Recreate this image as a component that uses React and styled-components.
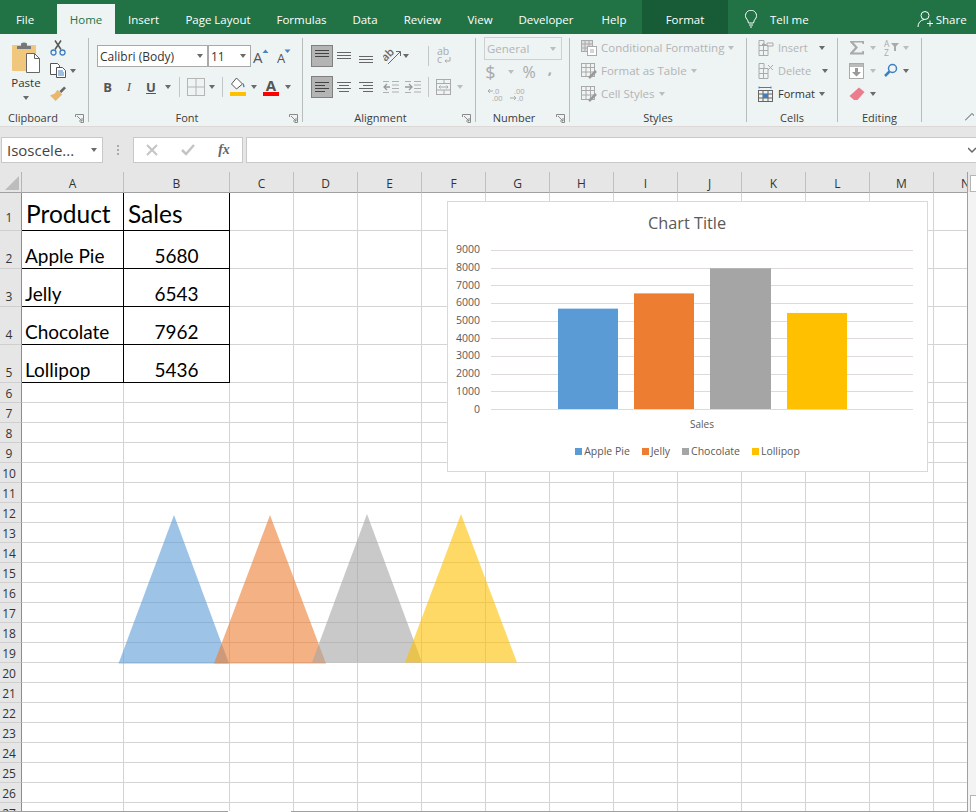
import React from 'react';
import styled, { createGlobalStyle } from 'styled-components';

const UI = `"Open Sans", "Noto Sans", "Liberation Sans", sans-serif`;
const CELL = `Lato, "Liberation Sans", sans-serif`;
const DIS = '#b3b3b3';

const Global = createGlobalStyle`
  html, body { margin: 0; padding: 0; background: #fff; }
  body { font-family: ${UI}; }
  #root { width: 976px; height: 812px; overflow: hidden; }
`;

const Page = styled.div`
  width: 976px; height: 812px; display: flex; flex-direction: column; overflow: hidden;
`;

/* ---------- tabs ---------- */
const TabBar = styled.div`
  height: 34px; flex: none; display: flex; background: #217346; color: #fff; padding-top: 4px; box-sizing: border-box;
`;
const Tab = styled.div`
  width: ${p => p.$w}px; flex: none; display: flex; align-items: center; justify-content: center;
  padding-right: ${p => p.$pr || 0}px; box-sizing: border-box; font-size: 11.5px;
  color: ${p => (p.$active ? '#217346' : '#fff')};
  background: ${p => (p.$active ? '#eef3f3' : p.$context ? '#185c37' : 'transparent')};
  margin-top: ${p => (p.$context ? -4 : 0)}px;
  padding-top: ${p => (p.$context ? 4 : 0)}px;
`;
const TabIcon = styled.div`
  display: flex; align-items: center; font-size: 11.5px; gap: ${p => p.$gap}px; margin-left: ${p => p.$ml}px;
`;

/* ---------- ribbon ---------- */
const Ribbon = styled.div`
  height: 93px; flex: none; box-sizing: border-box; display: flex; padding-top: 4px;
  background: #eef3f3; border-bottom: 1px solid #dcd8d8; color: #444;
`;
const Group = styled.section`
  width: ${p => p.$w}px; height: 84px; flex: none; box-sizing: border-box; display: flex; flex-direction: column;
  border-right: 1px solid ${p => (p.$plain ? 'transparent' : '#b9bcbc')};
`;
const GroupBody = styled.div`
  flex: 1; min-height: 0; padding: ${p => p.$pt ?? 7}px 0 0 ${p => p.$pl ?? 0}px;
  display: flex; flex-direction: column; gap: ${p => p.$gap ?? 9}px;
`;
const LabelRow = styled.div`
  height: 16px; margin-bottom: -4px; flex: none; display: flex; align-items: center;
`;
const GroupLabel = styled.div`
  flex: 1; text-align: center; font-size: 11px; line-height: 16px; color: #3c3c3c; padding-right: ${p => p.$pr || 0}px;
`;
const LauncherSlot = styled.div`
  width: 17px; flex: none; display: flex; justify-content: center;
`;
const Row = styled.div`
  display: flex; align-items: center; height: 22px; flex: none;
`;
const Slot = styled.div`
  width: ${p => p.$w}px; flex: none; display: flex; align-items: center; justify-content: center; height: 100%;
`;
const Divider = styled.div`
  width: 1px; height: 20px; flex: none; background: #c4c7c7; margin: 0 ${p => p.$r}px 0 ${p => p.$l}px;
`;
const Caret = styled.i`
  display: block; width: 0; height: 0; flex: none;
  border-left: 3.5px solid transparent; border-right: 3.5px solid transparent;
  border-top: 4px solid ${p => (p.$off ? '#bdbdbd' : '#6a6a6a')};
`;
const ComboBox = styled.div`
  width: ${p => p.$w}px; height: 22px; box-sizing: border-box; flex: none; background: #fff;
  border: 1.5px solid #a9a9a9;
  display: flex; align-items: center; justify-content: space-between; padding: 0 4px 0 2px;
  font-size: 12px; color: #333;
`;
const ActiveBtn = styled.div`
  width: 22px; height: 22px; box-sizing: border-box; flex: none; background: #b4b4b4; border: 1px solid #808080;
  display: flex; align-items: center; justify-content: center;
`;
const Letter = styled.span`
  font-size: 13px; color: #555;
  font-weight: ${p => (p.$b ? 700 : 400)}; font-style: ${p => (p.$i ? 'italic' : 'normal')};
  font-family: ${p => (p.$i ? '"Liberation Serif", serif' : UI)};
  text-decoration: ${p => (p.$u ? 'underline' : 'none')};
`;

/* paste column */
const ClipWrap = styled.div`
  flex: 1; display: flex; min-height: 0;
`;
const PasteCol = styled.div`
  width: 50px; flex: none; display: flex; flex-direction: column; align-items: center; padding: 4px 0 0 2px; box-sizing: border-box;
`;
const PasteText = styled.div`
  font-size: 11.5px; line-height: 14px; color: #333; margin: 3px 0 6px;
`;
const SmallCol = styled.div`
  display: flex; flex-direction: column; margin-top: -2px;
`;
const SmallRow = styled.div`
  height: 23px; display: flex; align-items: center; width: 34px;
`;
const SmallIcon = styled.div`
  width: 16px; display: flex; justify-content: center; flex: none;
`;

/* number */
const NumFormat = styled.div`
  width: 78px; height: 23px; box-sizing: border-box; border: 1.5px solid #cfcfcf; margin: -1px 0 1px 8px;
  display: flex; align-items: center; justify-content: space-between; padding: 0 5px 0 2px;
  color: ${DIS}; font-size: 11.5px; flex: none;
`;
const DisGlyph = styled.span`
  color: #aaa; font-size: ${p => p.$s}px; line-height: 1; padding-bottom: ${p => p.$raise || 0}px;
  font-weight: ${p => p.$w || 400};
`;

/* list buttons */
const ListCol = styled.div`
  flex: 1; min-height: 0; margin-top: -2px; padding: 0 0 0 11px; display: flex; flex-direction: column;
`;
const ListItem = styled.div`
  height: 23px; flex: none; display: flex; align-items: center; gap: 4px;
  font-size: ${p => p.$s || 11.5}px; color: ${p => (p.$on ? '#333' : DIS)};
`;
const CaretGap = styled.span`
  display: inline-flex; margin-left: ${p => p.$g}px;
`;

const EditGrid = styled.div`
  display: grid; grid-template-columns: 16px 16px 2px 16px 14px; grid-auto-rows: 23px; padding-left: 11px;
  align-items: center; justify-items: center; margin-top: -2px;
`;

/* ---------- formula bar ---------- */
const FormulaBar = styled.div`
  height: 45px; flex: none; box-sizing: border-box; padding: 10px 0 9px 1px; background: #e6e6e6; display: flex;
`;
const NameBox = styled.div`
  width: 102px; box-sizing: border-box; background: #fff; border: 1px solid #c8c8c8; flex: none;
  display: flex; align-items: center; justify-content: space-between; padding: 0 5px 0 5px;
  font-size: 15px; color: #444;
`;
const Dots = styled.div`
  width: 30px; flex: none; display: flex; align-items: center; justify-content: center;
`;
const FxBox = styled.div`
  width: 110px; box-sizing: border-box; background: #fff; border: 1px solid #c8c8c8; flex: none;
  display: grid; grid-template-columns: repeat(3, 36px); align-items: center; justify-items: center;
`;
const FormulaInput = styled.div`
  flex: 1; margin-left: 3px; box-sizing: border-box; background: #fff; border: 1px solid #c8c8c8; border-right: 0;
  display: flex; align-items: center; justify-content: flex-end;
`;

/* ---------- sheet ---------- */
const Sheet = styled.div`
  flex: 1; min-height: 0; display: flex; position: relative; overflow: hidden; background: #e6e6e6;
`;
const Grid = styled.div`
  width: 967px; height: 639px; flex: none; overflow: hidden; display: grid;
  grid-template-columns: 22px 102px 106px repeat(12, 64px);
  grid-template-rows: 21px repeat(5, 38px) repeat(22, 20px);
  background: #fff; border-bottom: 1px solid #a0a0a0; border-right: 1px solid #a0a0a0;
`;
const Corner = styled.div`
  background: #e6e6e6; border-bottom: 1px solid #a0a0a0; border-right: 1px solid #b5b5b5; box-sizing: border-box;
  display: flex; align-items: flex-end; justify-content: flex-end; padding: 0 2px 2px 0;
`;
const ColHead = styled.div`
  background: #e6e6e6; border-bottom: 1px solid #a0a0a0; box-sizing: border-box;
  display: flex; align-items: flex-end; justify-content: center; font-size: 12px; line-height: 17px; color: #333;
  white-space: nowrap; border-right: 1px solid #c0c0c0;
`;
const RowHead = styled.div`
  background: #e6e6e6; border-right: 1px solid #8c8c8c; border-bottom: 1px solid #cfcfcf; box-sizing: border-box;
  display: flex; align-items: flex-end; justify-content: center; padding: 0 3px ${p => (p.$first ? 3 : 0)}px 0;
  font-size: 12px; line-height: ${p => (p.$short ? 17 : 19)}px; color: #333;
`;
const Cell = styled.div`
  box-sizing: border-box; border-right: 1px solid ${p => (p.$table ? '#000' : '#d4d4d4')};
  border-bottom: 1px solid ${p => (p.$table ? '#000' : '#d4d4d4')};
  display: flex; align-items: flex-end; overflow: hidden; white-space: nowrap;
  justify-content: ${p => (p.$center ? 'center' : 'flex-start')};
  padding-left: ${p => (p.$center ? 0 : p.$pl)}px;
  font-family: ${CELL}; color: #000; font-size: ${p => (p.$big ? 24.5 : 19)}px;
  line-height: ${p => (p.$big ? 33 : 25)}px;
`;
const Gap = styled.div`
  position: absolute; left: 228px; bottom: 0; width: 63px; height: 1px; background: #fff;
`;
const ScrollBar = styled.div`
  flex: 1; background: #f3f3f3; display: flex; flex-direction: column; justify-content: space-between; align-items: flex-end;
  padding-top: 3px; position: relative;
`;
const ScrollTop = styled.div`
  height: 20px; width: 100%; background: #e6e6e6; position: absolute; top: 0; left: 0;
`;
const ScrollBtn = styled.div`
  width: 5px; height: 15px; background: #fff; border: 1px solid #b5b5b5; border-right: 0; position: relative; flex: none;
`;
const Shapes = styled.svg`
  position: absolute; left: 0; top: 0; pointer-events: none;
`;
const ChartFrame = styled.figure`
  position: absolute; left: 447px; top: 29px; width: 481px; height: 271px; box-sizing: border-box; margin: 0;
  background: #fff; border: 1px solid #dcd8d8; display: flex; flex-direction: column;
`;
const ChartTitle = styled.figcaption`
  text-align: center; font-size: 16.3px; line-height: 22px; color: #595959; margin-top: 10px; padding-right: 1px;
`;
const PlotSvg = styled.svg`
  display: block; flex: none; margin-top: -3px;
`;
const AxisName = styled.div`
  text-align: center; font-size: 10px; line-height: 14px; color: #595959; margin-top: 3px; padding-left: 29px;
`;
const Legend = styled.div`
  display: flex; justify-content: center; margin-top: 13px; font-size: 10.5px; color: #595959; gap: 12px;
`;
const LegendItem = styled.div`
  display: flex; align-items: center; gap: 2px; line-height: 14px;
`;
const Swatch = styled.i`
  display: block; width: 7px; height: 7px; background: ${p => p.$c};
`;
const FxMark = styled.span`
  font-family: "Liberation Serif", serif; font-style: italic; font-weight: 700; font-size: 14px; color: #666;
`;

/* ---------- icons ---------- */
const Launcher = () => (
  <svg width="9" height="9" viewBox="0 0 9 9" fill="none" stroke="#8a8a8a">
    <path d="M.5 3V.5h8v8H5.500" /><path d="M2 2l5 5M7 4v3H4" />
  </svg>
);
const PasteIcon = () => (
  <svg width="30" height="31" viewBox="0 0 30 31">
    <rect x="1" y="3" width="24" height="26" rx="1" fill="#f0c77d" />
    <path d="M6 7V4h4V1.500Q13 -.5 16 1.500V4h4v3z" fill="#777" />
    <path d="M15.500 11.500h8l5 5v14h-13z" fill="#fff" stroke="#666" />
    <path d="M23.500 11.500v5h5" fill="none" stroke="#666" />
  </svg>
);
const Scissors = () => (
  <svg width="16" height="16" viewBox="0 0 16 16" fill="none">
    <path d="M5 9.500L11 .500M11 9.500L5 .500" stroke="#555" strokeWidth="1.500" />
    <circle cx="3.500" cy="12.500" r="2.500" stroke="#3f7fc1" strokeWidth="1.300" />
    <circle cx="12.500" cy="12.500" r="2.500" stroke="#3f7fc1" strokeWidth="1.300" />
  </svg>
);
const CopyIcon = () => (
  <svg width="16" height="15" viewBox="0 0 16 15" fill="none">
    <path d="M.5.500h7l2 2v9h-9z" fill="#fff" stroke="#555" />
    <path d="M6.500 4.500h6l3 3v7h-9z" fill="#fff" stroke="#555" />
    <path d="M8 8h5M8 10h6M8 12h6" stroke="#3f7fc1" />
  </svg>
);
const BrushIcon = () => (
  <svg width="17" height="16" viewBox="0 0 17 16">
    <path d="M10 5l5-5 2 2-5 5z" fill="#666" />
    <path d="M8 3.500l5 5-3 3-4 4-6-6 5-2z" fill="#eab76e" />
  </svg>
);
const Big = ({ up }) => (
  <svg width="17" height="20" viewBox="0 0 17 20">
    <text x="0" y="17" fontFamily={UI} fontSize={up ? 15 : 13} fill="#555">A</text>
    <path d={up ? 'M9.500 7L12.500 3.500 15.500 7z' : 'M7.500 3.500h6L10.500 7z'} fill="#4a86c5" />
  </svg>
);
const BorderIcon = () => (
  <svg width="18" height="18" viewBox="0 0 18 18" fill="none" stroke="#b5b5b5">
    <rect x=".5" y=".5" width="17" height="17" /><path d="M9 .5v17M.5 9h17" />
  </svg>
);
const FillIcon = () => (
  <svg width="16" height="20" viewBox="0 0 16 20">
    <path d="M6.500 1L1.500 7l5 5 6-5z" fill="#fff" stroke="#555" />
    <path d="M13 6q2.500 3 1 4.500-1.500-.5-1-4.500z" fill="#3f7fc1" />
    <rect y="15" width="16" height="4" fill="#ffc000" />
  </svg>
);
const ColorIcon = () => (
  <svg width="16" height="22" viewBox="0 0 16 22">
    <text x="8" y="15" textAnchor="middle" fontFamily={UI} fontWeight="700" fontSize="15" fill="#555">A</text>
    <rect y="16" width="16" height="4" fill="#f00" />
  </svg>
);
const Lines = ({ ys, rows, color = '#666' }) => (
  <svg width="16" height="16" viewBox="0 0 16 16" fill="none" stroke={color}>
    {ys.map((y, i) => <path key={y} d={`M${rows[i][0]} ${y + .5}H${rows[i][1]}`} />)}
  </svg>
);
const Orient = () => (
  <svg width="18" height="18" viewBox="0 0 18 18" fill="none">
    <text x="0" y="11" transform="rotate(-45 6 10)" fontFamily={UI} fontSize="11" fontWeight="600" fill="#666">ab</text>
    <path d="M5 17L17 5M13 4.500h4.500V9" stroke="#666" />
  </svg>
);
const Indent = ({ right }) => (
  <svg width="16" height="14" viewBox="0 0 16 14" fill="none" stroke="#b0b0b0">
    <path d={right ? 'M0 7h6M4 4l3 3-3 3' : 'M7 7H1M4 4L1 7l3 3'} stroke="#999" strokeWidth="1.300" />
    <path d="M9 1.500h7M9 5h7M9 8.500h7M9 12h7M0 1.500h6M0 12.500h6" />
  </svg>
);
const WrapIcon = () => (
  <svg width="14" height="18" viewBox="0 0 14 18">
    <text x="0" y="8" fontFamily={UI} fontSize="10.500" fill="#aaa">ab</text>
    <text x="0" y="16" fontFamily={UI} fontSize="10.500" fill="#aaa">c</text>
    <path d="M13 10v4H8M9.500 12.500L8 14l1.500 1.500" fill="none" stroke="#aaa" />
  </svg>
);
const MergeIcon = () => (
  <svg width="16" height="16" viewBox="0 0 16 16" fill="none" stroke="#aaa">
    <rect x=".5" y=".5" width="14" height="15" /><path d="M.5 4.500h14M.5 11h14M8 .5v4M8 11v4M3 8h9M4.500 6.500L3 8l1.500 1.500M10.500 6.500L12 8l-1.500 1.500" />
  </svg>
);
const Decimal = ({ rev }) => (
  <svg width="18" height="15" viewBox="0 0 18 15">
    <text x={rev ? 5 : 6} y="6.500" fontFamily={UI} fontSize="7.500" fill="#aaa">{rev ? '.00' : '.0'}</text>
    <text x={rev ? 8 : 5} y="14" fontFamily={UI} fontSize="7.500" fill="#aaa">{rev ? '.0' : '.00'}</text>
    <path d={rev ? 'M1 11h6M5 9l2 2-2 2' : 'M1 4h5M3 2L1 4l2 2'} fill="none" stroke="#aaa" />
  </svg>
);
const CondIcon = () => (
  <svg width="16" height="16" viewBox="0 0 16 16" fill="none" stroke="#aaa">
    <rect x=".5" y=".5" width="11" height="11" fill="#ddd" /><path d="M.5 4h11M.5 8h11M4 .5v11M8 .5v11" />
    <rect x="6.500" y="6.500" width="9" height="9" fill="#fff" /><path d="M9 10h4M9 12h4" />
  </svg>
);
const TableIcon = () => (
  <svg width="16" height="16" viewBox="0 0 16 16" fill="none" stroke="#aaa">
    <rect x=".5" y=".5" width="13" height="13" /><path d="M.5 4.500h13M.5 9h13M5 .5v13M9.500 .5v13" />
    <path d="M8 15l7-7" stroke="#999" strokeWidth="2.500" />
  </svg>
);
const CellsIcon = ({ kind }) => (
  <svg width="16" height="16" viewBox="0 0 16 16" fill="none" stroke={kind === 'format' ? '#666' : '#aaa'}>
    {kind === 'format' ? (
      <>
        <path d="M1 1.500h12M1 .5v2M13 .5v2" stroke="#3f7fc1" />
        <rect x=".5" y="4.500" width="14" height="11" />
        <path d="M.5 8h14M.5 12h14M5 4.500v11M10 4.500v11" />
        <rect x="5" y="8" width="5" height="4" fill="#3f7fc1" stroke="none" />
      </>
    ) : (
      <>
        <path d="M1 .5h5v5H1zM1 5.500h9v5H1zM1 10.500h9v5H1zM5.500 5.500v10" />
        {kind === 'insert'
          ? <path d="M9 3h6v3H9zM8 4.500H4M6 3L4 4.500 6 6" />
          : <path d="M10 2l5 5M15 2l-5 5" />}
      </>
    )}
  </svg>
);
const Sigma = () => (
  <svg width="16" height="15" viewBox="0 0 16 15"><path d="M1 1h14v3h-1.500L13 2.500H4.500L9 7.500 4.500 12.500H13l.5-1.500H15v3.500H1V13l5-5.500L1 2z" fill="#aaa" /></svg>
);
const SortIcon = () => (
  <svg width="15" height="18" viewBox="0 0 15 18">
    <text x="0" y="8" fontFamily={UI} fontSize="8.500" fill="#aaa">A</text>
    <text x="0" y="16.500" fontFamily={UI} fontSize="8.500" fill="#aaa">Z</text>
    <path d="M7 4h8l-3 3.500V12H10V7.500z" fill="#aaa" />
  </svg>
);
const FillDown = () => (
  <svg width="16" height="16" viewBox="0 0 16 16">
    <rect x=".5" y=".5" width="14" height="15" fill="#fff" stroke="#aaa" />
    <rect x="1" y="1" width="13" height="3" fill="#bbb" />
    <path d="M6 5h3v4h3l-4.500 4.500L3 9h3z" fill="#999" />
  </svg>
);
const FindIcon = () => (
  <svg width="14" height="15" viewBox="0 0 14 15" fill="none" stroke="#3f7fc1">
    <circle cx="8.500" cy="5.500" r="4" strokeWidth="1.500" /><path d="M5.500 8.500L1 13" strokeWidth="2.500" />
  </svg>
);
const Eraser = () => (
  <svg width="16" height="14" viewBox="0 0 16 14">
    <path d="M10 .5l5.500 4.500-7 8H5L.5 9z" fill="#ec7b8c" />
  </svg>
);
const Cross = () => (
  <svg width="12" height="12" viewBox="0 0 12 12"><path d="M1 1l10 10M11 1L1 11" stroke="#c4c4c4" strokeWidth="2" /></svg>
);
const Check = () => (
  <svg width="14" height="12" viewBox="0 0 14 12" fill="none"><path d="M1 6l4 4 8-9" stroke="#c4c4c4" strokeWidth="2.500" /></svg>
);

const THREE = [[1, 15], [1, 15], [1, 15]];
const cols = 'ABCDEFGHIJKLMN'.split('');
const table = [
  ['Product', 'Sales'], ['Apple Pie', 5680], ['Jelly', 6543], ['Chocolate', 7962], ['Lollipop', 5436],
];
const rows = Array.from({ length: 27 }, (_, i) => i + 1);
const bars = [
  { name: 'Apple Pie', v: 5680, c: '#5b9bd5', x: 110, w: 60 },
  { name: 'Jelly', v: 6543, c: '#ed7d31', x: 186, w: 60 },
  { name: 'Chocolate', v: 7962, c: '#a5a5a5', x: 262, w: 61 },
  { name: 'Lollipop', v: 5436, c: '#ffc000', x: 339, w: 60 },
];
const tris = [
  ['#5b9bd5', '118.500,663.500 174,515 229,663.500'],
  ['#ed7d31', '214,663.500 270,515 326,663.500'],
  ['#a5a5a5', '312,662.500 367,514 422,662.500'],
  ['#ffc000', '405,662.500 461,514 517,662.500'],
];

const Chart = () => (
  <ChartFrame>
    <ChartTitle>Chart Title</ChartTitle>
    <PlotSvg width="479" height="183" viewBox="0 0 479 183">
      {Array.from({ length: 10 }, (_, i) => {
        const y = 178 - i * 17.67;
        return (
          <g key={i}>
            <path d={`M43 ${Math.round(y) + .5}H465`} stroke="#dedada" />
            <text x="32" y={y + 3.5} textAnchor="end" fontFamily={UI} fontSize="10.500" fill="#595959">{i * 1000}</text>
          </g>
        );
      })}
      {bars.map(b => {
        const h = b.v / 1000 * 17.67;
        return <rect key={b.name} x={b.x} y={178 - h} width={b.w} height={h} fill={b.c} />;
      })}
    </PlotSvg>
    <AxisName>Sales</AxisName>
    <Legend>
      {bars.map(b => (
        <LegendItem key={b.name}><Swatch $c={b.c} />{b.name}</LegendItem>
      ))}
    </Legend>
  </ChartFrame>
);

export default function App() {
  return (
    <Page>
      <Global />
      <TabBar>
        <Tab $w={57} $pr={7}>File</Tab>
        <Tab $w={58} $active>Home</Tab>
        <Tab $w={57}>Insert</Tab>
        <Tab $w={92}>Page Layout</Tab>
        <Tab $w={75}>Formulas</Tab>
        <Tab $w={52}>Data</Tab>
        <Tab $w={63}>Review</Tab>
        <Tab $w={52}>View</Tab>
        <Tab $w={80}>Developer</Tab>
        <Tab $w={56}>Help</Tab>
        <Tab $w={86} $context>Format</Tab>
        <TabIcon $gap={12} $ml={16}>
          <svg width="14" height="18" viewBox="0 0 14 18" fill="none" stroke="#fff"><path d="M4.500 13Q4 10 2 8a5.500 5.500 0 1 1 10 0q-2 2-2.500 5zM5 15h4M6 17h2" /></svg>
          Tell me
        </TabIcon>
        <TabIcon $gap={2} $ml={108}>
          <svg width="17" height="18" viewBox="0 0 17 18" fill="none" stroke="#fff"><circle cx="8" cy="5.500" r="4" /><path d="M1 17q0-6 6-7.500M10 13.500h6M13 10.500v6" /></svg>
          Share
        </TabIcon>
      </TabBar>

      <Ribbon>
        <Group $w={89}>
          <ClipWrap>
            <PasteCol>
              <PasteIcon />
              <PasteText>Paste</PasteText>
              <Caret />
            </PasteCol>
            <SmallCol>
              <SmallRow><SmallIcon><Scissors /></SmallIcon></SmallRow>
              <SmallRow><SmallIcon><CopyIcon /></SmallIcon><CaretGap $g={4}><Caret /></CaretGap></SmallRow>
              <SmallRow><SmallIcon><BrushIcon /></SmallIcon></SmallRow>
            </SmallCol>
          </ClipWrap>
          <LabelRow>
            <GroupLabel $pr={5}>Clipboard</GroupLabel>
            <LauncherSlot><Launcher /></LauncherSlot>
          </LabelRow>
        </Group>

        <Group $w={214}>
          <GroupBody $pl={8}>
            <Row>
              <ComboBox $w={111}>Calibri (Body)<Caret /></ComboBox>
              <ComboBox $w={43}>11<Caret /></ComboBox>
              <Slot $w={20}><Big up /></Slot>
              <Slot $w={4} />
              <Slot $w={20}><Big /></Slot>
            </Row>
            <Row>
              <Slot $w={21}><Letter $b>B</Letter></Slot>
              <Slot $w={22}><Letter $i>I</Letter></Slot>
              <Slot $w={22}><Letter $u $b>U</Letter></Slot>
              <Slot $w={12}><Caret /></Slot>
              <Divider $l={5} $r={4} />
              <Slot $w={24}><BorderIcon /></Slot>
              <Slot $w={8}><Caret /></Slot>
              <Divider $l={6} $r={5} />
              <Slot $w={20}><FillIcon /></Slot>
              <Slot $w={12}><Caret /></Slot>
              <Slot $w={22}><ColorIcon /></Slot>
              <Slot $w={12}><Caret /></Slot>
            </Row>
          </GroupBody>
          <LabelRow>
            <GroupLabel>Font</GroupLabel>
            <LauncherSlot><Launcher /></LauncherSlot>
          </LabelRow>
        </Group>

        <Group $w={173}>
          <GroupBody $pl={8}>
            <Row>
              <ActiveBtn><Lines ys={[2, 5, 8]} rows={THREE} color="#444" /></ActiveBtn>
              <Slot $w={22}><Lines ys={[4, 7, 10]} rows={THREE} /></Slot>
              <Slot $w={22}><Lines ys={[8, 11, 14]} rows={THREE} /></Slot>
              <Slot $w={3} />
              <Slot $w={23}><Orient /></Slot>
              <Slot $w={6}><Caret /></Slot>
              <Divider $l={19} $r={5} />
              <Slot $w={20}><WrapIcon /></Slot>
            </Row>
            <Row>
              <ActiveBtn><Lines ys={[3, 6, 9, 12]} rows={[[1, 15], [1, 11], [1, 15], [1, 11]]} color="#444" /></ActiveBtn>
              <Slot $w={22}><Lines ys={[3, 6, 9, 12]} rows={[[1, 15], [3, 13], [1, 15], [3, 13]]} /></Slot>
              <Slot $w={22}><Lines ys={[3, 6, 9, 12]} rows={[[1, 15], [5, 15], [1, 15], [5, 15]]} /></Slot>
              <Slot $w={2} />
              <Slot $w={24}><Indent /></Slot>
              <Slot $w={20}><Indent right /></Slot>
              <Divider $l={5} $r={5} />
              <Slot $w={20}><MergeIcon /></Slot>
              <Slot $w={12}><Caret $off /></Slot>
            </Row>
          </GroupBody>
          <LabelRow>
            <GroupLabel>Alignment</GroupLabel>
            <LauncherSlot><Launcher /></LauncherSlot>
          </LabelRow>
        </Group>

        <Group $w={94}>
          <GroupBody $pt={0} $gap={0}>
            <NumFormat>General<Caret $off /></NumFormat>
            <Row>
              <Slot $w={29}><DisGlyph $s={18}>$</DisGlyph></Slot>
              <Slot $w={12}><Caret $off /></Slot>
              <Slot $w={24}><DisGlyph $s={16}>%</DisGlyph></Slot>
              <Slot $w={18}><DisGlyph $s={15} $w={700} $raise={8}>,</DisGlyph></Slot>
            </Row>
            <Row>
              <Slot $w={10} />
              <Slot $w={19}><Decimal /></Slot>
              <Slot $w={4} />
              <Slot $w={18}><Decimal rev /></Slot>
            </Row>
          </GroupBody>
          <LabelRow>
            <GroupLabel>Number</GroupLabel>
            <LauncherSlot><Launcher /></LauncherSlot>
          </LabelRow>
        </Group>

        <Group $w={177}>
          <ListCol>
            <ListItem><CondIcon />Conditional Formatting<Caret $off /></ListItem>
            <ListItem><TableIcon />Format as Table<Caret $off /></ListItem>
            <ListItem><TableIcon />Cell Styles<Caret $off /></ListItem>
          </ListCol>
          <LabelRow><GroupLabel>Styles</GroupLabel></LabelRow>
        </Group>

        <Group $w={91}>
          <ListCol>
            <ListItem $s={11}><CellsIcon kind="insert" />Insert<CaretGap $g={7}><Caret /></CaretGap></ListItem>
            <ListItem $s={11}><CellsIcon kind="delete" />Delete<CaretGap $g={7}><Caret /></CaretGap></ListItem>
            <ListItem $s={11} $on><CellsIcon kind="format" />Format<Caret /></ListItem>
          </ListCol>
          <LabelRow><GroupLabel>Cells</GroupLabel></LabelRow>
        </Group>

        <Group $w={84}>
          <GroupBody $pt={0} $gap={0}>
            <EditGrid>
              <Sigma /><Caret $off /><span /><SortIcon /><Caret $off />
              <FillDown /><Caret $off /><span /><FindIcon /><Caret />
              <Eraser /><Caret /><span /><span /><span />
            </EditGrid>
          </GroupBody>
          <LabelRow><GroupLabel>Editing</GroupLabel></LabelRow>
        </Group>

        <Group $w={54} $plain>
          <GroupBody $pt={74} $pl={43}>
            <svg width="9" height="9" viewBox="0 0 9 9" fill="none" stroke="#555"><path d="M0 8.500L7 1.500l3 3" /></svg>
          </GroupBody>
        </Group>
      </Ribbon>

      <FormulaBar>
        <NameBox>Isoscele...<Caret /></NameBox>
        <Dots>
          <svg width="3" height="11" viewBox="0 0 3 11" fill="#aaa"><rect y="0" width="2" height="2" /><rect y="4" width="2" height="2" /><rect y="8" width="2" height="2" /></svg>
        </Dots>
        <FxBox><Cross /><Check /><FxMark>fx</FxMark></FxBox>
        <FormulaInput>
          <svg width="8" height="7" viewBox="0 0 8 7" fill="none" stroke="#666" strokeWidth="1.500"><path d="M0 1l4 4 4-4" /></svg>
        </FormulaInput>
      </FormulaBar>

      <Sheet>
        <Grid>
          <Corner>
            <svg width="14" height="14" viewBox="0 0 14 14"><path d="M14 0v14H0z" fill="#bdbdbd" /></svg>
          </Corner>
          {cols.map(c => <ColHead key={c}>{c}</ColHead>)}
          {rows.map(r => (
            <React.Fragment key={r}>
              <RowHead $first={r === 1} $short={r > 5}>{r}</RowHead>
              {cols.map((c, ci) => {
                const inTable = r <= 5 && ci < 2;
                return (
                  <Cell
                    key={c}
                    $table={inTable}
                    $big={r === 1}
                    $center={inTable && r > 1 && ci === 1}
                    $pl={r === 1 ? 4 : 3}
                  >
                    {inTable ? table[r - 1][ci] : null}
                  </Cell>
                );
              })}
            </React.Fragment>
          ))}
        </Grid>
        <ScrollBar>
          <ScrollTop />
          <ScrollBtn />
          <ScrollBtn />
        </ScrollBar>
        <Gap />
        <Shapes width="976" height="640" viewBox="0 172 976 640">
          {tris.map(([c, p]) => <polygon key={c} points={p} fill={c} fillOpacity="0.6" />)}
        </Shapes>
        <Chart />
      </Sheet>
    </Page>
  );
}
